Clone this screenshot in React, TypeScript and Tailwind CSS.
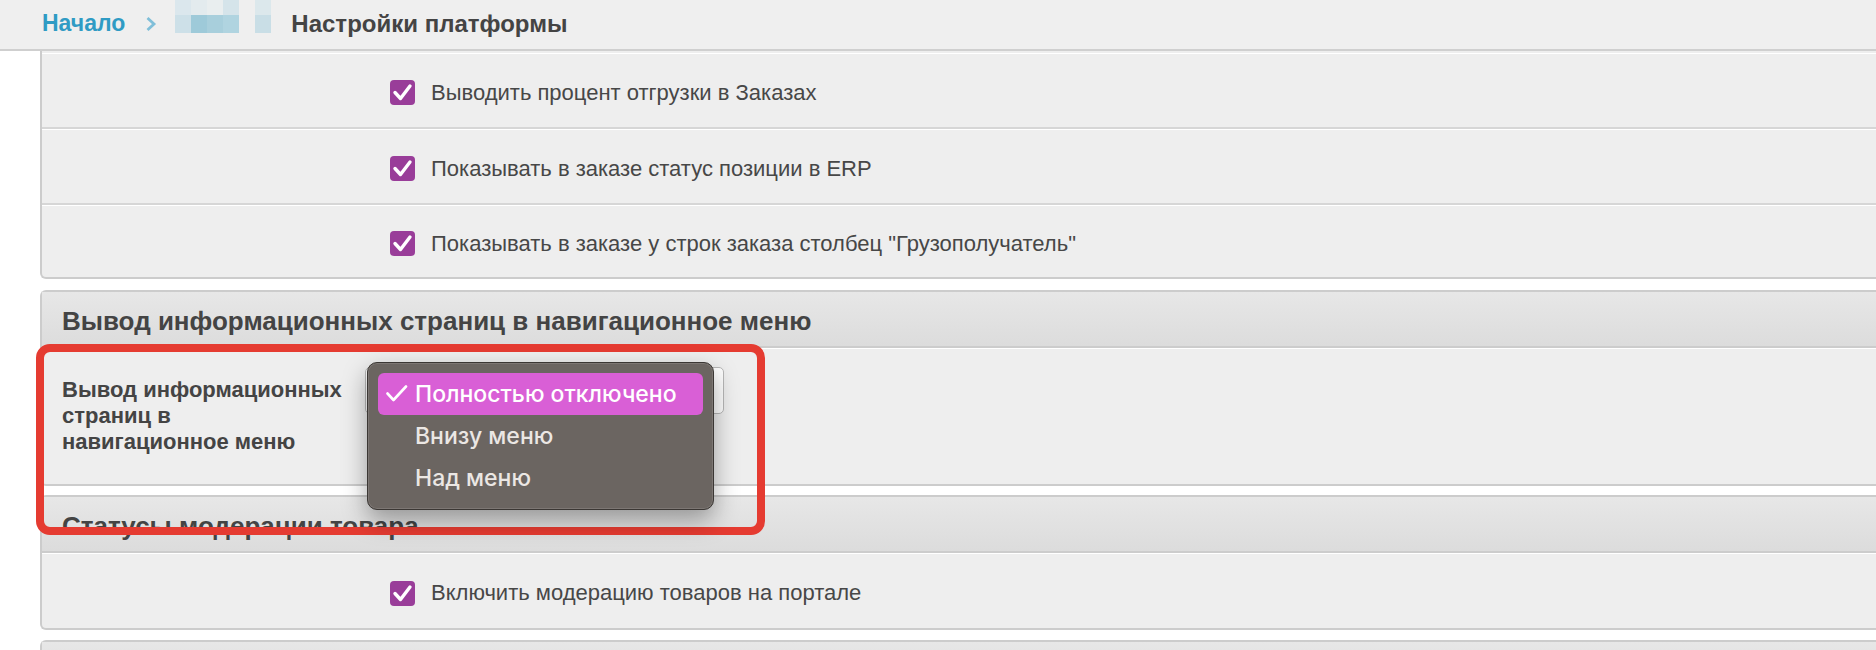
import clsx from "clsx";

// Мозаика вместо скрытого пункта хлебных крошек (6 колонок × 2 ряда)
const MOSAIC_TOP = ["#dbe7ed", "#e3ebee", "#e9eeef", "#d5e4ea", "#efefef", "#dce8ec"];
const MOSAIC_BOTTOM = ["#cde0e8", "#9ecad9", "#a8cfdc", "#b0d4e0", "#efefef", "#c9dee6"];

const ORDER_ROWS = [
  { label: "Выводить процент отгрузки в Заказах", h: "h-[76px]", last: false },
  { label: "Показывать в заказе статус позиции в ERP", h: "h-[76px]", last: false },
  {
    label: 'Показывать в заказе у строк заказа столбец "Грузополучатель"',
    h: "h-[72px]",
    last: true,
  },
];

const MENU_OPTIONS = ["Полностью отключено", "Внизу меню", "Над меню"];

function Checkbox() {
  return (
    <span className="flex h-[25px] w-[25px] shrink-0 items-center justify-center rounded-[4px] bg-[#993d99]">
      <svg width="25" height="25" viewBox="0 0 25 25">
        <path
          d="M5 12.5 L10.5 18.5 L20 6"
          fill="none"
          stroke="#fff"
          strokeWidth="3.4"
          strokeLinecap="round"
          strokeLinejoin="round"
        />
      </svg>
    </span>
  );
}

function CheckRow({ label, className, last }: { label: string; className: string; last?: boolean }) {
  return (
    <div
      className={clsx(
        "flex items-center gap-[16px] border-t border-white pl-[348px] pt-[4px]",
        className,
        !last && "border-b-2 border-b-[#d6d6d6]",
      )}
    >
      <Checkbox />
      <span className="text-[22px] leading-none text-[#474747]">{label}</span>
    </div>
  );
}

function SectionHeader({ title }: { title: string }) {
  return (
    <div className="flex h-[56px] items-center border-b-2 border-[#cccccc] bg-gradient-to-b from-[#e7e7e7] to-[#dcdcdc] pl-[20px] pt-[3px]">
      <h2 className="text-[26px] font-bold leading-none text-[#444]">{title}</h2>
    </div>
  );
}

function Breadcrumbs() {
  return (
    <div className="flex h-[51px] items-center border-b-2 border-[#cfcfcf] bg-[#efefef] pb-[2px] pl-[42px]">
      <a className="text-[23px] font-bold leading-none text-[#2f9bc4]">Начало</a>
      <svg className="ml-[20px]" width="12" height="16" viewBox="0 0 12 16">
        <path d="M2.5 2 L9 8 L2.5 14" fill="none" stroke="#80bfd9" strokeWidth="2.8" />
      </svg>
      <div className="ml-[18px] grid grid-cols-6 self-start">
        {MOSAIC_TOP.map((c, i) => (
          <span key={"t" + i} className="h-[15px] w-[16px]" style={{ backgroundColor: c }} />
        ))}
        {MOSAIC_BOTTOM.map((c, i) => (
          <span key={"b" + i} className="h-[18px] w-[16px]" style={{ backgroundColor: c }} />
        ))}
      </div>
      <span className="ml-[20px] text-[24px] font-bold leading-none text-[#444]">Настройки платформы</span>
    </div>
  );
}

function PopupMenu() {
  return (
    <div className="absolute left-[1px] top-[-6px] z-10 w-[347px] rounded-[10px] border border-[#3b3734] bg-[#6b6561] px-[10px] py-[10px] font-['Inter',sans-serif] shadow-[0_10px_24px_rgba(0,0,0,0.35),inset_0_0_0_1px_rgba(255,255,255,0.12)]">
      {MENU_OPTIONS.map((opt, i) => (
        <div
          key={opt}
          className={clsx(
            "relative flex h-[42px] items-center rounded-[6px] pl-[37px] text-[23px] font-medium leading-none",
            i === 0 ? "bg-[#d95fd6] text-white" : "text-[#ebe7e4]",
          )}
        >
          {i === 0 && (
            <svg className="absolute left-[8px] top-[12px]" width="22" height="17" viewBox="0 0 22 17">
              <path
                d="M1.5 8.5 L7.5 15 L20 1.5"
                fill="none"
                stroke="#fff"
                strokeWidth="2.6"
                strokeLinecap="round"
                strokeLinejoin="round"
              />
            </svg>
          )}
          {opt}
        </div>
      ))}
    </div>
  );
}

export default function App() {
  return (
    <div className="relative h-[650px] w-full overflow-hidden bg-white font-['Liberation_Sans',Arial,sans-serif] text-[#444]">
      <Breadcrumbs />

      <div className="flex flex-col pl-[40px]">
        {/* Заказы */}
        <div className="rounded-bl-[6px] border-b-2 border-l-2 border-[#cccccc] bg-[#eeeeee] pt-[2px]">
          {ORDER_ROWS.map((r) => (
            <CheckRow key={r.label} label={r.label} className={r.h} last={r.last} />
          ))}
        </div>

        {/* Информационные страницы */}
        <div className="mt-[11px] rounded-l-[6px] border-y-2 border-l-2 border-[#cccccc] bg-[#eeeeee]">
          <SectionHeader title="Вывод информационных страниц в навигационное меню" />
          <div className="flex h-[136px] items-start border-t border-white pl-[20px] pt-[18px]">
            <div className="w-[303px] pt-[10px] text-[22px] font-bold leading-[26px] text-[#444]">
              Вывод информационных
              <br />
              страниц в
              <br />
              навигационное меню
            </div>
            <div className="relative h-[47px] w-[359px] rounded-[5px] border border-[#b8b8b8] bg-white">
              <PopupMenu />
            </div>
          </div>
        </div>

        {/* Модерация */}
        <div className="mt-[9px] rounded-l-[6px] border-y-2 border-l-2 border-[#cccccc] bg-[#eeeeee]">
          <SectionHeader title="Статусы модерации товара" />
          <CheckRow label="Включить модерацию товаров на портале" className="h-[75px]" last />
        </div>

        <div className="mt-[10px] rounded-tl-[6px] border-l-2 border-t-2 border-[#cccccc]">
          <SectionHeader title="" />
        </div>
      </div>

      {/* Аннотация */}
      <div className="pointer-events-none absolute left-[36px] top-[344px] h-[191px] w-[729px] rounded-[14px] border-[8px] border-[#e53b31]" />
    </div>
  );
}
